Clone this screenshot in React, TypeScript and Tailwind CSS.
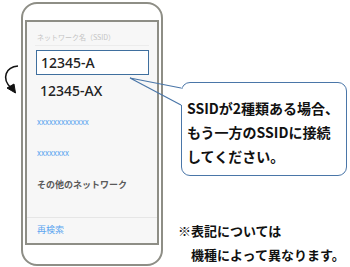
import React from 'react'

const jp = { fontFamily: '"Noto Sans CJK JP", "Noto Sans", sans-serif' }

const CurvedArrow = () => (
    <svg width="21" height="34" viewBox="0 0 21 34" className="mt-[62px]">
        <path d="M18 4 C 6 5, 1 16, 11 26" fill="none" stroke="#111" strokeWidth="1.5" />
        <path d="M7 26 L 15.5 31 L 14 22 Z" fill="#111" stroke="#111" strokeWidth="1" strokeLinejoin="round" />
    </svg>
)

const PhoneScreen = () => (
    <div className="mx-[2px] mt-[16px] h-[225px] border-2 border-[#8e8e86] bg-[#f7f7f7]" style={jp}>
        <div className="mx-[8px] pt-[10px] pb-[3px] border-b border-[#ececec]">
            <p className="pl-[2px] text-[7px] leading-[10px] text-[#c4c4c4]">ネットワーク名（SSID）</p>
        </div>
        <div className="mt-[4px] ml-[9px] mr-[8px] h-[25px] border-[1.5px] border-[#3f6f9e] bg-white flex items-center pl-[4px]">
            <span className="text-[14px] font-medium text-[#222]" style={{ fontFamily: '"Noto Sans", sans-serif' }}>12345-A</span>
        </div>
        <p className="mt-[6px] ml-[13px] text-[14px] leading-[20px] font-medium text-[#222]" style={{ fontFamily: '"Noto Sans", sans-serif' }}>12345-AX</p>
        <p className="mt-[16px] ml-[10px] text-[8px] leading-[10px] text-[#5aa5f0]">xxxxxxxxxxxxx</p>
        <p className="mt-[21px] ml-[10px] text-[8px] leading-[10px] text-[#5aa5f0]">xxxxxxxx</p>
        <p className="mt-[21px] ml-[10px] text-[9px] leading-[12px] font-bold text-[#5a5a5a]">その他のネットワーク</p>
        <div className="mt-[26px] border-b border-[#e6e6e6]" />
        <p className="mt-[6px] ml-[10px] text-[9px] leading-[12px] text-[#5aa5f0]">再検索</p>
    </div>
)

export default function App() {
    return (
        <div className="relative w-[350px] h-[267px] bg-white overflow-hidden flex">
            <CurvedArrow />
            <div className="mt-[2px] w-[142px] h-[264px] border-2 border-[#8e8e86] rounded-[16px] bg-white">
                <PhoneScreen />
            </div>
            <div className="flex flex-col" style={jp}>
                <div className="mt-[82px] ml-[18px] w-[166px] h-[96px] border-[1.5px] border-[#4a76a8] rounded-[9px] bg-white pl-[5px] pt-[13px]">
                    <p className="text-[14px] leading-[24px] font-bold text-[#111] whitespace-nowrap">SSIDが2種類ある場合、</p>
                    <p className="text-[14px] leading-[24px] font-bold text-[#111] whitespace-nowrap">もう一方のSSIDに接続</p>
                    <p className="text-[14px] leading-[24px] font-bold text-[#111] whitespace-nowrap">してください。</p>
                </div>
                <div className="mt-[43px] ml-[15px]">
                    <p className="text-[13px] leading-[24px] font-bold text-[#111] whitespace-nowrap">※表記については</p>
                    <p className="pl-[13px] text-[13px] leading-[24px] font-bold text-[#111] whitespace-nowrap">機種によって異なります。</p>
                </div>
            </div>
            <svg className="absolute left-0 top-0 pointer-events-none" width="350" height="267">
                <line x1="181.5" y1="89" x2="181.5" y2="105" stroke="#fff" strokeWidth="3" />
                <polyline points="181,88 130,78 181,105" fill="none" stroke="#4a76a8" strokeWidth="1.2" />
            </svg>
        </div>
    )
}
